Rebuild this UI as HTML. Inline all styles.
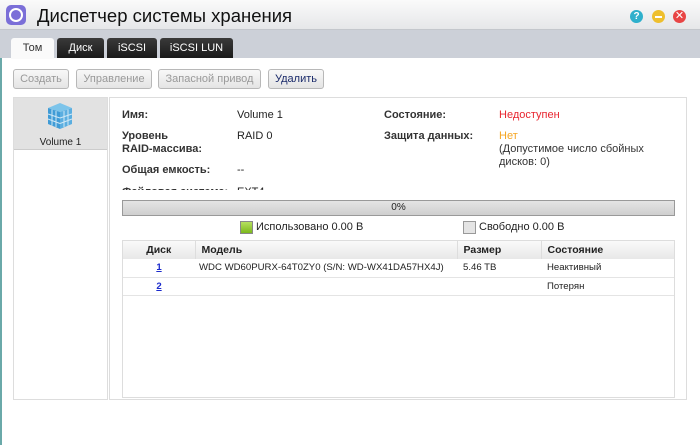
<!DOCTYPE html><html><head><meta charset="utf-8"><style>
*{box-sizing:border-box;margin:0;padding:0}
body{width:700px;height:445px;overflow:hidden;background:#fff;font-family:"Liberation Sans","DejaVu Sans",sans-serif;font-size:11px;color:#222;position:relative}
.a{position:absolute}
#title{left:0;top:0;width:700px;height:30px;background:linear-gradient(#fafafa,#e6e7e9);border-bottom:1px solid #c4c7cc}
#tabbar{left:0;top:30px;width:700px;height:28px;background:#ccd0d8}
.tab{top:38px;height:20px;color:#fff;background:linear-gradient(#3a3a3a,#1a1a1a);font-size:11px;text-align:center;line-height:21px;border-radius:3px 3px 0 0}
.btn{top:69px;height:20px;border:1px solid #b8b8b8;border-radius:3px;background:linear-gradient(#f8f8f8,#e4e4e4);color:#999;text-align:center;line-height:18px;font-size:11px}
.lb{font-weight:bold;color:#333}
table{border-collapse:collapse;width:100%;table-layout:fixed}
th{background:linear-gradient(#fafafa,#e8e8e8);height:18px;text-align:left;font-size:10.5px;border-right:1px solid #ddd;padding-left:6px}
td{height:18px;font-size:9.6px;border-bottom:1px solid #e4e4e4;padding-left:6px;white-space:nowrap;overflow:hidden}
</style></head><body>
<div class="a" style="left:0;top:0;width:2px;height:445px;background:#6aa9a9"></div>
<div class="a" id="title"></div>
<div class="a" style="left:6px;top:5px;width:20px;height:20px;border-radius:5px;background:#7b6fd8"><div class="a" style="left:3px;top:3px;width:14px;height:14px;border-radius:7px;border:2px solid #fff;"></div></div>
<div class="a" style="left:37px;top:5px;font-size:18.5px;color:#111">Диспетчер системы хранения</div>
<div class="a" style="left:630px;top:10px;width:13px;height:13px;border-radius:7px;background:#2fb0cc;color:#fff;font-size:10px;font-weight:bold;text-align:center;line-height:13px">?</div>
<div class="a" style="left:652px;top:10px;width:13px;height:13px;border-radius:7px;background:#eebf2e"><div class="a" style="left:3px;top:6px;width:7px;height:2px;background:#fff"></div></div>
<div class="a" style="left:673px;top:10px;width:13px;height:13px;border-radius:7px;background:#e84545;color:#fff;font-size:11px;text-align:center;line-height:13px">✕</div>
<div class="a" id="tabbar"></div>
<div class="a tab" style="left:11px;width:43px;background:#fafafa;color:#333;height:21px">Том</div>
<div class="a tab" style="left:57px;width:47px">Диск</div>
<div class="a tab" style="left:107px;width:50px">iSCSI</div>
<div class="a tab" style="left:160px;width:73px">iSCSI LUN</div>
<div class="a btn" style="left:13px;width:56px">Создать</div>
<div class="a btn" style="left:76px;width:76px">Управление</div>
<div class="a btn" style="left:158px;width:103px">Запасной привод</div>
<div class="a btn" style="left:268px;width:56px;color:#1a2a6a">Удалить</div>
<div class="a" style="left:13px;top:97px;width:95px;height:303px;border:1px solid #ddd"></div>
<div class="a" style="left:14px;top:98px;width:93px;height:52px;background:#e2e2e2;border-bottom:1px solid #ccc"></div>
<div class="a" style="left:47px;top:102px;width:26px;height:28px">
<svg width="26" height="28" viewBox="0 0 26 28"><polygon points="1,6 13,1 25,6 13,10" fill="#7cc4ea"/><polygon points="1,6 13,10 13,27 1,22" fill="#3f9bd6"/><polygon points="13,10 25,6 25,22 13,27" fill="#5aaee0"/><g stroke="#cfe8f6" stroke-width="1"><line x1="1" y1="12" x2="13" y2="16"/><line x1="1" y1="17" x2="13" y2="21.5"/><line x1="5" y1="7.5" x2="5" y2="23.5"/><line x1="9" y1="9" x2="9" y2="25"/><line x1="13" y1="16" x2="25" y2="12"/><line x1="13" y1="21.5" x2="25" y2="17"/><line x1="17" y1="9" x2="17" y2="25"/><line x1="21" y1="7.5" x2="21" y2="23.5"/></g></svg></div>
<div class="a" style="left:14px;top:137px;width:93px;text-align:center;font-size:10px">Volume 1</div>
<div class="a" style="left:109px;top:97px;width:578px;height:303px;border:1px solid #ddd"></div>
<div class="a" style="left:110px;top:98px;width:576px;height:92px;overflow:hidden">
<div class="a lb" style="left:12px;top:11px">Имя:</div><div class="a" style="left:127px;top:11px">Volume 1</div>
<div class="a lb" style="left:12px;top:32px;line-height:13px">Уровень<br>RAID-массива:</div><div class="a" style="left:127px;top:32px">RAID 0</div>
<div class="a lb" style="left:12px;top:66px">Общая емкость:</div><div class="a" style="left:127px;top:66px">--</div>
<div class="a lb" style="left:12px;top:88px">Файловая система:</div><div class="a" style="left:127px;top:88px">EXT4</div>
<div class="a lb" style="left:274px;top:11px">Состояние:</div><div class="a" style="left:389px;top:11px;color:#e8252f">Недоступен</div>
<div class="a lb" style="left:274px;top:32px">Защита данных:</div><div class="a" style="left:389px;top:32px;color:#f5a623;line-height:13px">Нет</div>
<div class="a" style="left:389px;top:45px;line-height:13px;color:#333">(Допустимое число сбойных<br>дисков: 0)</div>
</div>
<div class="a" style="left:122px;top:200px;width:553px;height:16px;border:1px solid #999;background:linear-gradient(#e4e4e4,#cfcfcf);text-align:center;font-size:10px;line-height:14px">0%</div>
<div class="a" style="left:240px;top:221px;width:13px;height:13px;border:1px solid #888;background:linear-gradient(#b6e060,#7cb81c)"></div>
<div class="a" style="left:256px;top:221px;font-size:11px">Использовано 0.00 B</div>
<div class="a" style="left:463px;top:221px;width:13px;height:13px;border:1px solid #999;background:#e4e4e4"></div>
<div class="a" style="left:479px;top:221px;font-size:11px">Свободно 0.00 B</div>
<div class="a" style="left:122px;top:240px;width:553px;height:158px;border:1px solid #ddd">
<table><tr><th style="width:72px;text-align:center;padding:0">Диск</th><th style="width:262px">Модель</th><th style="width:84px">Размер</th><th style="border-right:0">Состояние</th></tr>
<tr><td style="text-align:center;padding:0"><a style="color:#1a2acc;font-weight:bold;text-decoration:underline">1</a></td><td style="padding-left:4px">WDC WD60PURX-64T0ZY0 (S/N: WD-WX41DA57HX4J)</td><td>5.46 TB</td><td>Неактивный</td></tr>
<tr><td style="text-align:center;padding:0"><a style="color:#1a2acc;font-weight:bold;text-decoration:underline">2</a></td><td></td><td></td><td>Потерян</td></tr></table></div>
</body></html>
